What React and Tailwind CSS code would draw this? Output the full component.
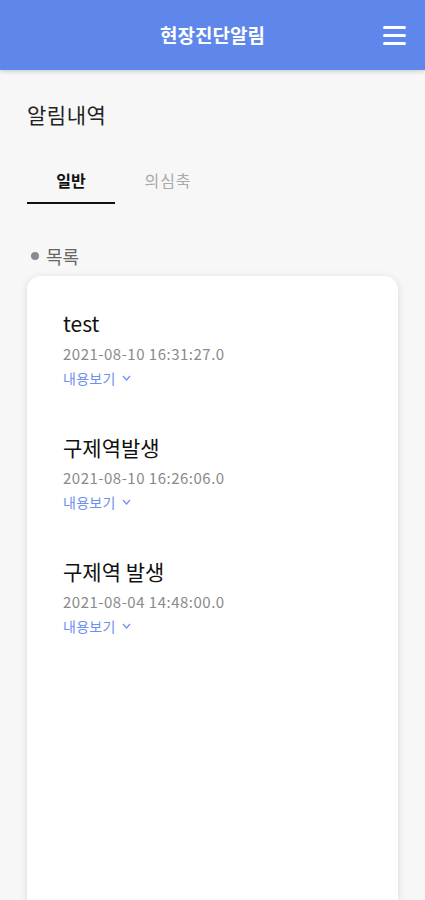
const items = [
  { title: 'test', date: '2021-08-10 16:31:27.0' },
  { title: '구제역발생', date: '2021-08-10 16:26:06.0' },
  { title: '구제역 발생', date: '2021-08-04 14:48:00.0' },
];

export default function App() {
  return (
    <div
      className="min-h-[900px] bg-[#f7f7f7] flex flex-col"
      style={{ fontFamily: '"Noto Sans CJK KR", "Noto Sans", sans-serif' }}
    >
      {/* Header */}
      <header className="h-[70px] bg-[#5f86ea] shadow-[0_2px_4px_rgba(0,0,0,0.15)] relative flex items-center justify-center">
        <h1 className="text-white text-[19px] font-bold">현장진단알림</h1>
        <div className="absolute right-[19px] top-[26px] flex flex-col gap-[5px]">
          <span className="block w-[23px] h-[3px] bg-white rounded-full"></span>
          <span className="block w-[23px] h-[3px] bg-white rounded-full"></span>
          <span className="block w-[23px] h-[3px] bg-white rounded-full"></span>
        </div>
      </header>

      {/* Title */}
      <div className="px-[27px] pt-[29px]">
        <h2 className="text-[21px] text-[#222] leading-[30px] tracking-[0.5px]">알림내역</h2>
      </div>

      {/* Tabs */}
      <div className="px-[27px] mt-[39px] flex">
        <div className="w-[88px] flex flex-col items-center">
          <span className="text-[16px] font-bold text-[#111] leading-[24px]">일반</span>
          <span className="block w-full h-[2px] bg-[#111] mt-[10px]"></span>
        </div>
        <div className="w-[106px] flex flex-col items-center">
          <span className="text-[16px] text-[#aaa] leading-[24px] tracking-[1px]">의심축</span>
        </div>
      </div>

      {/* List label */}
      <div className="px-[31px] mt-[40px] flex items-center gap-[7px]">
        <span className="block w-[8px] h-[8px] rounded-full bg-[#8a8a95]"></span>
        <span className="text-[18px] text-[#666] leading-[24px]">목록</span>
      </div>

      {/* Card */}
      <div className="mx-[27px] mt-[8px] flex-1 bg-white rounded-t-[14px] shadow-[0_2px_8px_rgba(0,0,0,0.13)] pt-[32px] px-[36px]">
        <ul className="flex flex-col">
          {items.map((item, i) => (
            <li key={i} className="h-[124px] flex flex-col">
              <span className="text-[21px] text-[#111] leading-[30px]">{item.title}</span>
              <span className="text-[15px] text-[#8a8a8a] leading-[20px] mt-[6px] tracking-[0.5px]">{item.date}</span>
              <span className="text-[14px] text-[#6d8ff0] leading-[20px] mt-[4px] flex items-center gap-[6px] tracking-[0.3px]">
                내용보기
                <svg width="9" height="6" viewBox="0 0 9 6" fill="none">
                  <path d="M1 1l3.5 4L8 1" stroke="#6d8ff0" strokeWidth="1.2" />
                </svg>
              </span>
            </li>
          ))}
        </ul>
      </div>
    </div>
  );
}
